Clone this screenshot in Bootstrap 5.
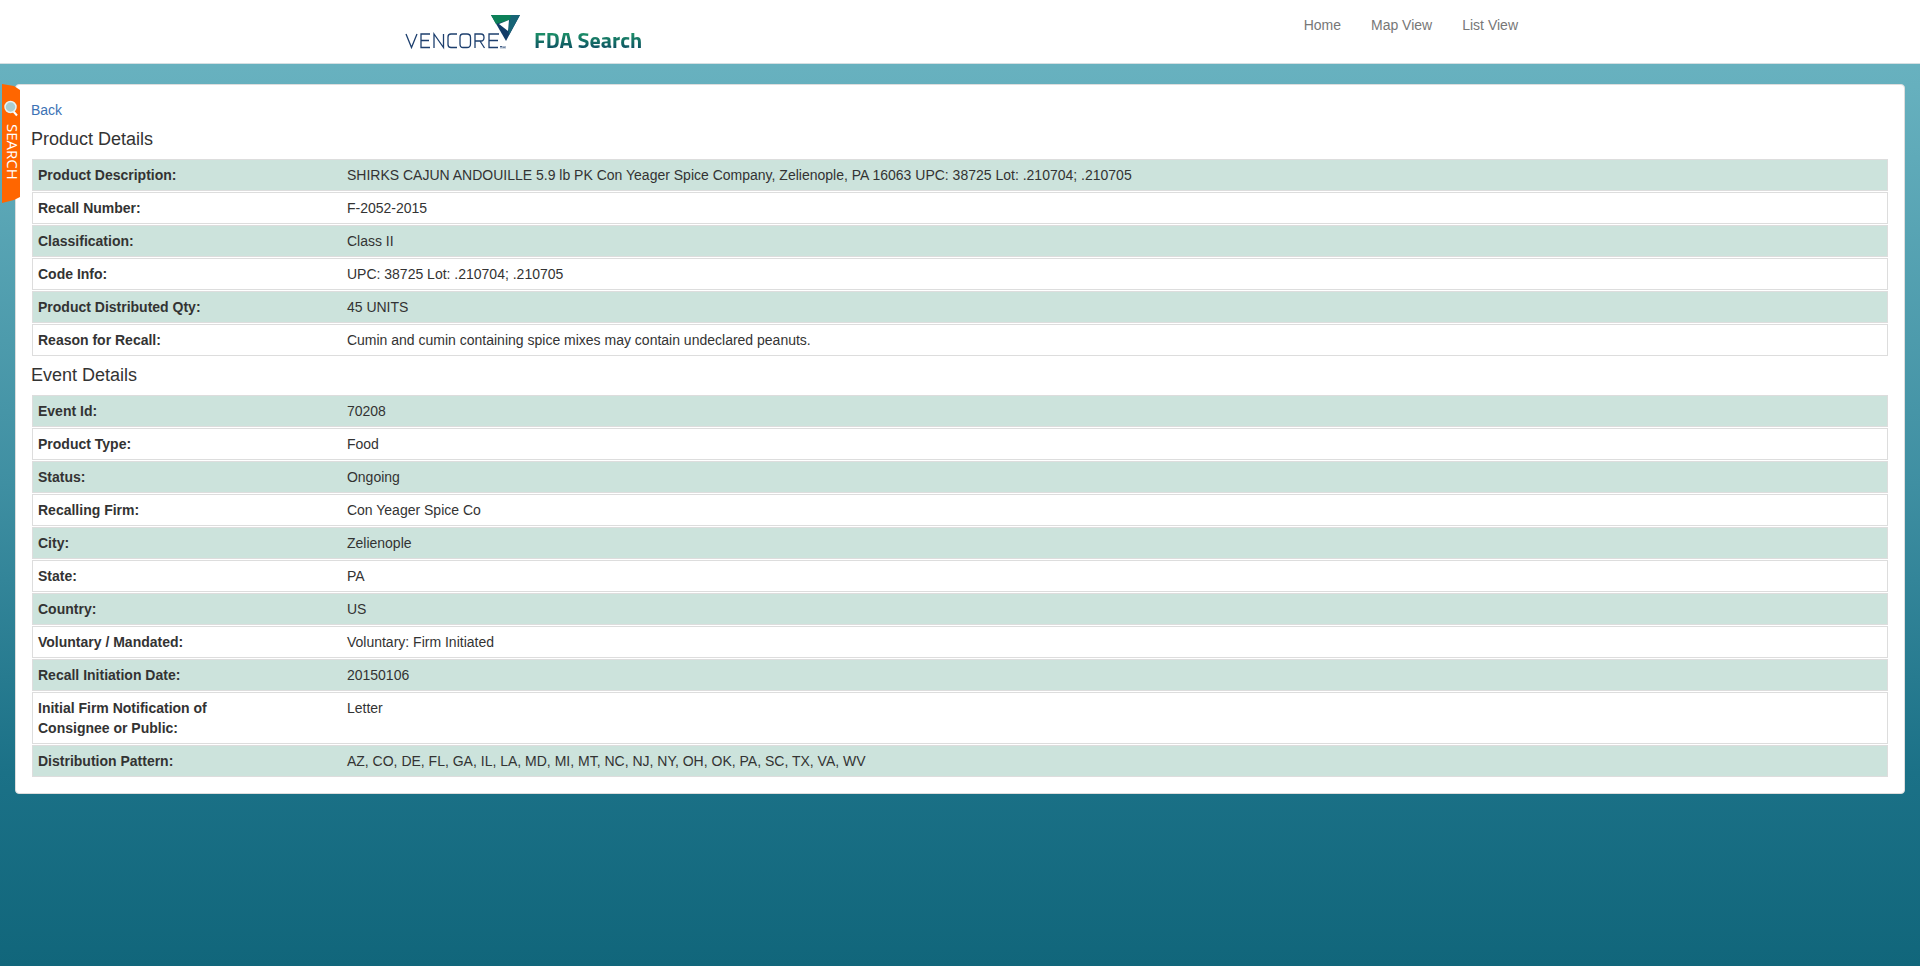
<!DOCTYPE html>
<html lang="en">
<head>
<meta charset="utf-8">
<meta name="viewport" content="width=device-width, initial-scale=1">
<title>FDA Search - Recall Details</title>
<link href="https://cdn.jsdelivr.net/npm/bootstrap@5.3.0/dist/css/bootstrap.min.css" rel="stylesheet">
<style>
body{font-family:"Liberation Sans",Arial,sans-serif;font-size:14px;line-height:20px;color:#333;min-height:100vh;background:linear-gradient(#6cb4c2 0,#66b0be 9%,#3f8fa2 50%,#1b7187 80%,#11667b 100%) no-repeat}
.site-header{background:#fff;border-bottom:1px solid #d5dfe2;height:64px}
.site-inner{max-width:1170px;padding:0 12px 0 30px}
.brand{padding-top:14px;gap:13px;text-decoration:none}
.brand svg{display:block}
.brand-name{padding-top:11px;font:700 22px/30px "Titillium Web","Open Sans",sans-serif;background:linear-gradient(#1f9a68 40%,#0d5063 85%);-webkit-background-clip:text;background-clip:text;color:transparent}
.site-nav .nav-link{padding:15px;color:#777;line-height:20px}
.search-tab{position:absolute;left:2px;top:84px;width:18px;height:119px;padding:0;border:0;background:#f60;clip-path:polygon(0 0,12px 2px,100% 6px,100% 113px,12px 116px,0 100%);color:#fff}
.search-tab svg{position:absolute;left:2px;top:16px}
.search-tab span{position:absolute;left:1px;top:40px;writing-mode:vertical-rl;font:15px/20px "Open Sans",sans-serif}
.details-panel{margin:20px 15px;padding:15px;background:#fff;border:1px solid #ddd;border-radius:4px}
.back-link{display:inline-block;margin-bottom:1px;color:#3c72b5;text-decoration:none}
.details-panel h2{font-size:18px;line-height:20px;margin:8px 0 9px;font-weight:400}
.detail-list{width:100%;border-collapse:separate;border-spacing:0 1px;padding:0 1px}
.detail-list th,.detail-list td{border:solid #ddd;padding:5px;vertical-align:top}
.detail-list th{width:16.7%;border-width:1px 0 1px 1px;padding-right:90px}
.detail-list td{border-width:1px 1px 1px 0}
.detail-list tr:nth-child(odd)>*{background:#cce3dc}
</style>
</head>
<body>
<header class="site-header">
  <div class="site-inner container-fluid d-flex justify-content-between align-items-start">
    <a href="#" class="brand d-flex align-items-start" aria-label="Vencore FDA Search">
      <svg width="116" height="36" viewBox="0 0 116 36" aria-hidden="true">
        <g fill="none" stroke="#1d3f6e" stroke-width="1.3">
          <path d="M1 20l5.500 13.500L12 20M25 20h-9v13.500h9M16 26.500h8M29 34V20l9.500 13.500V20M52 20h-6q-3 0-3 3v7.500q0 3 3 3h6M58 20h4q3.500 0 3.500 3.500v6.500q0 3.500-3.500 3.500h-4q-3 0-3-3.500v-6.500q0-3.500 3-3.500zM70 34V20h6q3 0 3 3.500t-3 3.500h-6M75 27l4.500 7M94 20h-10v13.500h9M84 26.500h9"/>
          <path stroke-width=".8" d="M95 32.500h2M96 32.500v2M98 34.500v-2l1 1 1-1v2"/>
        </g>
        <path d="M86 1h29L101 27z" fill="#113c68"/>
        <path d="M86 1h22l-3 5-14 4z" fill="#0c8058"/>
        <path d="M106 1h9l-11 20-1-8z" fill="#176476"/>
        <path d="M94 10l10-4-1 11z" fill="#fff"/>
      </svg>
      <span class="brand-name">FDA Search</span>
    </a>
    <nav aria-label="Main"><ul class="site-nav nav">
      <li class="nav-item"><a class="nav-link" href="#">Home</a></li>
      <li class="nav-item"><a class="nav-link" href="#">Map View</a></li>
      <li class="nav-item"><a class="nav-link" href="#">List View</a></li>
    </ul></nav>
  </div>
</header>
<main class="details-panel">
  <a href="#" class="back-link">Back</a>
  <h2>Product Details</h2>
  <table class="detail-list">
    <tr><th scope="row">Product Description:</th><td>SHIRKS CAJUN ANDOUILLE 5.9 lb PK Con Yeager Spice Company, Zelienople, PA 16063 UPC: 38725 Lot: .210704; .210705</td></tr>
    <tr><th scope="row">Recall Number:</th><td>F-2052-2015</td></tr>
    <tr><th scope="row">Classification:</th><td>Class II</td></tr>
    <tr><th scope="row">Code Info:</th><td>UPC: 38725 Lot: .210704; .210705</td></tr>
    <tr><th scope="row">Product Distributed Qty:</th><td>45 UNITS</td></tr>
    <tr><th scope="row">Reason for Recall:</th><td>Cumin and cumin containing spice mixes may contain undeclared peanuts.</td></tr>
  </table>
  <h2>Event Details</h2>
  <table class="detail-list">
    <tr><th scope="row">Event Id:</th><td>70208</td></tr>
    <tr><th scope="row">Product Type:</th><td>Food</td></tr>
    <tr><th scope="row">Status:</th><td>Ongoing</td></tr>
    <tr><th scope="row">Recalling Firm:</th><td>Con Yeager Spice Co</td></tr>
    <tr><th scope="row">City:</th><td>Zelienople</td></tr>
    <tr><th scope="row">State:</th><td>PA</td></tr>
    <tr><th scope="row">Country:</th><td>US</td></tr>
    <tr><th scope="row">Voluntary / Mandated:</th><td>Voluntary: Firm Initiated</td></tr>
    <tr><th scope="row">Recall Initiation Date:</th><td>20150106</td></tr>
    <tr><th scope="row">Initial Firm Notification of Consignee or Public:</th><td>Letter</td></tr>
    <tr><th scope="row">Distribution Pattern:</th><td>AZ, CO, DE, FL, GA, IL, LA, MD, MI, MT, NC, NJ, NY, OH, OK, PA, SC, TX, VA, WV</td></tr>
  </table>
</main>
<button type="button" class="search-tab">
  <svg width="14" height="17" viewBox="0 0 14 17" aria-hidden="true"><path d="M9 11l4 4.500" stroke="#fff" stroke-width="2"/><circle cx="6.500" cy="7" r="5.500" fill="#a9cdd0" stroke="#e6f3f3" stroke-width="1.500"/></svg>
  <span>SEARCH</span>
</button>
<script src="https://cdn.jsdelivr.net/npm/bootstrap@5.3.0/dist/js/bootstrap.bundle.min.js"></script>
</body>
</html>
